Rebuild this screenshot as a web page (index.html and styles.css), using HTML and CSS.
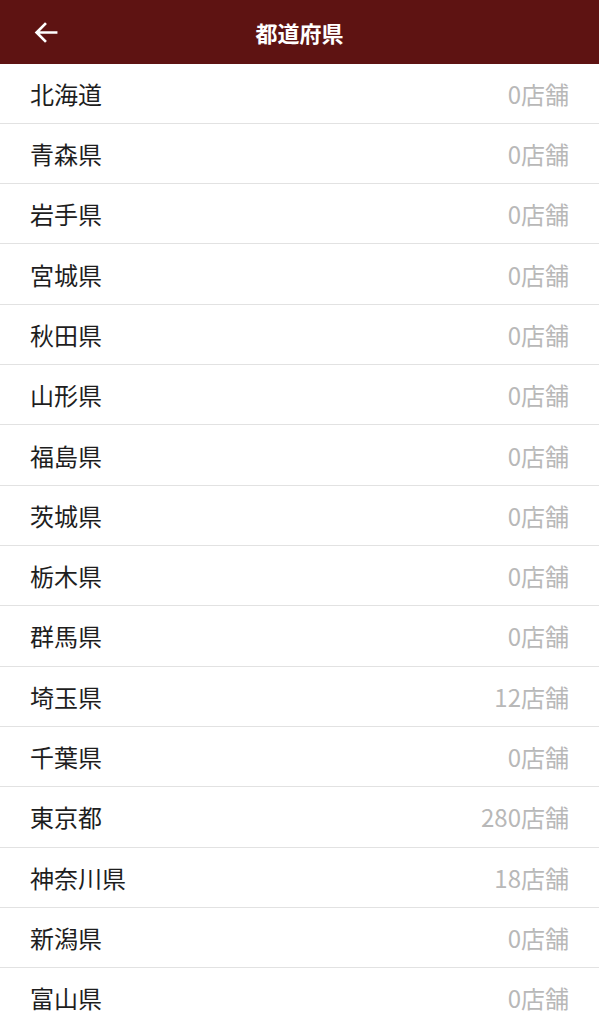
FILE: index.html
```html
<!DOCTYPE html>
<html lang="ja">

<head>
    <meta charset="UTF-8">
    <meta name="viewport" content="width=device-width, initial-scale=1.0">
    <title>都道府県</title>
    <link rel="stylesheet" href="styles.css">
</head>

<body>
    <header class="topbar">
        <button class="back" type="button" aria-label="戻る">
            <svg width="25" height="25" viewBox="0 0 24 24">
                <path d="M22.5 12H2.5M11.5 3L2.5 12l9 9" fill="none" stroke="#fff" stroke-width="2.6" stroke-linecap="butt" stroke-linejoin="miter"/>
            </svg>
        </button>
        <h1>都道府県</h1>
    </header>

    <ul class="pref-list">
        <li><span class="name">北海道</span><span class="count">0店舗</span></li>
        <li><span class="name">青森県</span><span class="count">0店舗</span></li>
        <li><span class="name">岩手県</span><span class="count">0店舗</span></li>
        <li><span class="name">宮城県</span><span class="count">0店舗</span></li>
        <li><span class="name">秋田県</span><span class="count">0店舗</span></li>
        <li><span class="name">山形県</span><span class="count">0店舗</span></li>
        <li><span class="name">福島県</span><span class="count">0店舗</span></li>
        <li><span class="name">茨城県</span><span class="count">0店舗</span></li>
        <li><span class="name">栃木県</span><span class="count">0店舗</span></li>
        <li><span class="name">群馬県</span><span class="count">0店舗</span></li>
        <li><span class="name">埼玉県</span><span class="count">12店舗</span></li>
        <li><span class="name">千葉県</span><span class="count">0店舗</span></li>
        <li><span class="name">東京都</span><span class="count">280店舗</span></li>
        <li><span class="name">神奈川県</span><span class="count">18店舗</span></li>
        <li><span class="name">新潟県</span><span class="count">0店舗</span></li>
        <li><span class="name">富山県</span><span class="count">0店舗</span></li>
    </ul>
</body>

</html>
```

FILE: styles.css
```css
body {
    margin: 0;
    font-family: "Noto Sans CJK JP", "Noto Sans", sans-serif;
    background-color: #fff;
    overflow: hidden;
}

.topbar {
    position: relative;
    height: 63.5px;
    background-color: #5e1312;
    display: flex;
    align-items: center;
    justify-content: center;
}

.topbar h1 {
    margin: 0;
    color: #fff;
    font-size: 22px;
    font-weight: bold;
}

.back {
    position: absolute;
    left: 34px;
    top: 20px;
    padding: 0;
    border: none;
    background: none;
    display: flex;
}

.pref-list {
    list-style: none;
    margin: 0;
    padding: 0;
}

.pref-list li {
    height: 59.32px;
    border-bottom: 1px solid #e2e2e2;
    display: flex;
    align-items: center;
    justify-content: space-between;
    padding: 0 30px;
}

.name {
    font-size: 24px;
    color: #1e1e1e;
}

.count {
    font-size: 24px;
    color: #b8b8b8;
}
```
